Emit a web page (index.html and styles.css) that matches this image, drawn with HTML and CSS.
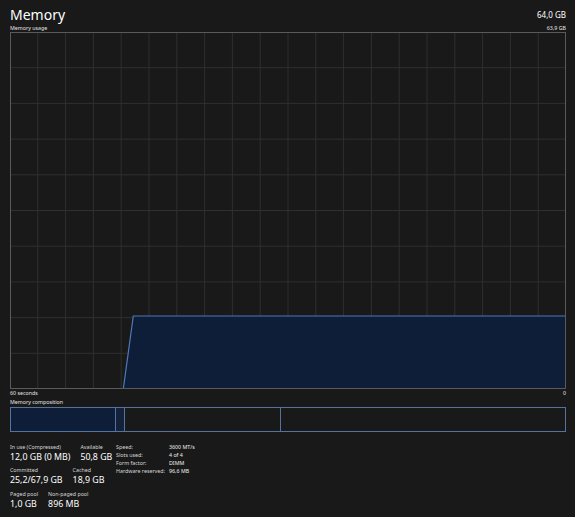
FILE: index.html
```html
<!DOCTYPE html>
<html lang="en">
<head>
    <meta charset="UTF-8">
    <meta name="viewport" content="width=device-width, initial-scale=1.0">
    <title>Memory</title>
    <link rel="stylesheet" href="styles.css">
</head>
<body>
    <div class="perf">
        <div class="head">
            <h1>Memory</h1>
            <span class="total">64,0 GB</span>
        </div>
        <div class="caption">
            <span>Memory usage</span>
            <span>63,9 GB</span>
        </div>

        <!-- usage over the last 60 seconds -->
        <div class="chart">
            <svg viewBox="0 0 556 357" width="556" height="357">
                <g class="grid" id="grid"></g>
                <polygon class="area" points="113.3,357 123.3,284 556,284 556,357"></polygon>
                <polyline class="line" points="113.3,357 123.3,284 556,284"></polyline>
            </svg>
        </div>
        <div class="caption under">
            <span>60 seconds</span>
            <span>0</span>
        </div>

        <div class="caption comp-title">Memory composition</div>
        <div class="comp">
            <div class="seg used" style="width: 105px"></div>
            <div class="seg modified" style="width: 9px"></div>
            <div class="seg standby" style="width: 156px"></div>
            <div class="seg free"></div>
        </div>

        <div class="stats">
            <div class="blocks">
                <div class="row">
                    <div class="stat"><div class="label">In use (Compressed)</div><div class="value">12,0 GB (0 MB)</div></div>
                    <div class="stat"><div class="label">Available</div><div class="value">50,8 GB</div></div>
                </div>
                <div class="row">
                    <div class="stat"><div class="label">Committed</div><div class="value">25,2/67,9 GB</div></div>
                    <div class="stat"><div class="label">Cached</div><div class="value">18,9 GB</div></div>
                </div>
                <div class="row">
                    <div class="stat"><div class="label">Paged pool</div><div class="value">1,0 GB</div></div>
                    <div class="stat"><div class="label">Non-paged pool</div><div class="value">896 MB</div></div>
                </div>
            </div>
            <div class="props">
                <span class="key">Speed:</span><span>3600 MT/s</span>
                <span class="key">Slots used:</span><span>4 of 4</span>
                <span class="key">Form factor:</span><span>DIMM</span>
                <span class="key">Hardware reserved:</span><span>96,6 MB</span>
            </div>
        </div>
    </div>

    <script>
        // 20 x 10 grid behind the chart
        const grid = document.getElementById('grid');
        const ns = 'http://www.w3.org/2000/svg';
        for (let i = 1; i < 20; i++) {
            const x = (556 / 20 * i).toFixed(1);
            const l = document.createElementNS(ns, 'line');
            l.setAttribute('x1', x); l.setAttribute('x2', x);
            l.setAttribute('y1', 0); l.setAttribute('y2', 357);
            grid.appendChild(l);
        }
        for (let i = 1; i < 10; i++) {
            const y = (357 / 10 * i).toFixed(1);
            const l = document.createElementNS(ns, 'line');
            l.setAttribute('x1', 0); l.setAttribute('x2', 556);
            l.setAttribute('y1', y); l.setAttribute('y2', y);
            grid.appendChild(l);
        }
    </script>
</body>
</html>
```

FILE: styles.css
```css
body {
    margin: 0;
    background: #191919;
    color: #fff;
    font-family: "Noto Sans", "Open Sans", sans-serif;
}
.perf {
    width: 556px;
    padding: 0 9px 0 10px;
}
.head {
    display: flex;
    justify-content: space-between;
    height: 25px;
}
h1 {
    margin: 0;
    font-size: 14px;
    font-weight: 400;
    line-height: 29px;
}
.total {
    margin-top: 11px;
    font-size: 8px;
    line-height: 8px;
}
.caption {
    display: flex;
    justify-content: space-between;
    font-size: 5.3px;
    line-height: 7px;
    color: #e6e6e6;
}
.caption.under {
    margin-top: 1px;
}
.caption.comp-title {
    margin-top: 2px;
}
.chart {
    width: 556px;
    height: 357px;
    box-sizing: border-box;
    border: 1px solid #5a5a5a;
    overflow: hidden;
}
.chart svg {
    display: block;
    margin: -1px;
}
.grid line {
    stroke: #2f2f2f;
    stroke-width: 1;
}
.area {
    fill: #0e1d38;
}
.line {
    fill: none;
    stroke: #4f79b8;
    stroke-width: 1.2;
}
.comp {
    display: flex;
    height: 25px;
    margin-top: 1px;
    border: 1px solid #56739e;
    box-sizing: border-box;
}
.seg {
    box-sizing: border-box;
    border-right: 1px solid #56739e;
}
.seg.used {
    background: #0e1d38;
}
.seg.modified {
    background: #13213a;
}
.seg.free {
    flex: 1;
    border-right: none;
}
.stats {
    display: flex;
    align-items: flex-start;
    gap: 6px;
    margin-top: 11.5px;
}
.blocks {
    width: 100px;
}
.row {
    display: flex;
    gap: 10px;
    margin-bottom: 4px;
    white-space: nowrap;
}
.label {
    font-size: 5.3px;
    line-height: 7px;
    color: #d8d8d8;
}
.value {
    font-size: 8.8px;
    line-height: 12.5px;
}
.props {
    display: grid;
    grid-template-columns: 53px auto;
    grid-auto-rows: 8px;
    margin-top: -0.5px;
    font-size: 5.3px;
    line-height: 8px;
    color: #f0f0f0;
    white-space: nowrap;
}
.props .key {
    color: #d8d8d8;
}
```
